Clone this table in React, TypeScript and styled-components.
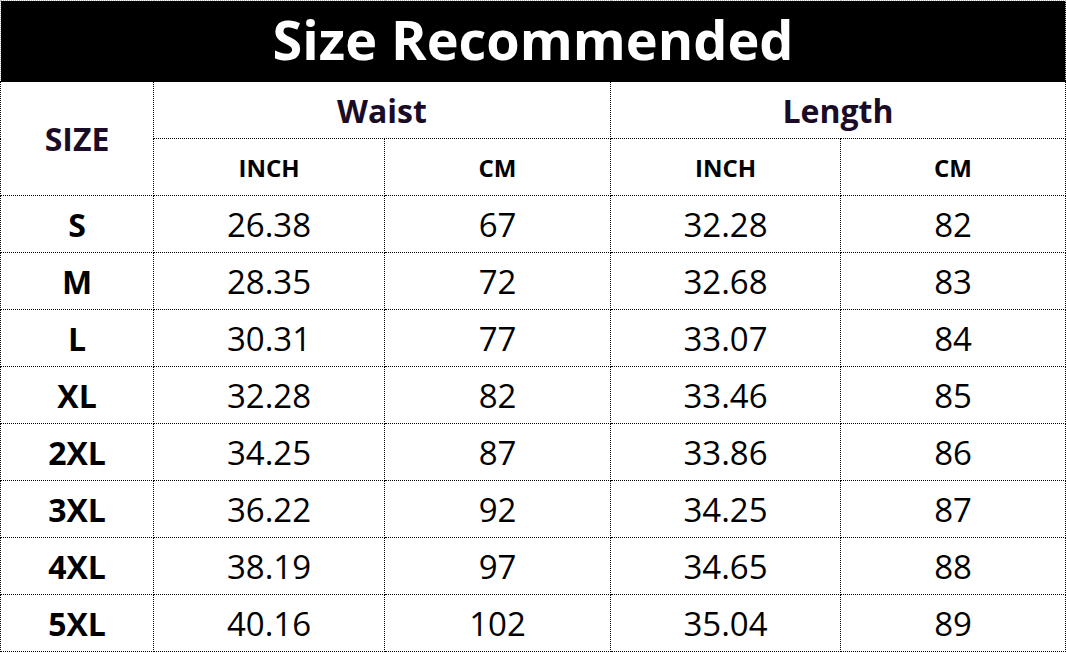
import styled, { createGlobalStyle } from 'styled-components';

const GlobalStyle = createGlobalStyle`
  html, body {
    margin: 0;
    padding: 0;
    background: #ffffff;
  }
  body {
    font-family: "Open Sans", "Noto Sans", sans-serif;
  }
`;

const rows = [
  ['S', '26.38', '67', '32.28', '82'],
  ['M', '28.35', '72', '32.68', '83'],
  ['L', '30.31', '77', '33.07', '84'],
  ['XL', '32.28', '82', '33.46', '85'],
  ['2XL', '34.25', '87', '33.86', '86'],
  ['3XL', '36.22', '92', '34.25', '87'],
  ['4XL', '38.19', '97', '34.65', '88'],
  ['5XL', '40.16', '102', '35.04', '89'],
];

const App = () => {
  return (
    <Page>
      <GlobalStyle />
      <Table>
        <colgroup>
          <col style={{ width: 153 }} />
          <col style={{ width: 231 }} />
          <col style={{ width: 226 }} />
          <col style={{ width: 230 }} />
          <col style={{ width: 225 }} />
        </colgroup>
        <thead>
          <tr>
            <Title colSpan={5}>Size Recommended</Title>
          </tr>
          <HeadRow>
            <GroupCell rowSpan={2}>SIZE</GroupCell>
            <GroupCell colSpan={2}>Waist</GroupCell>
            <GroupCell colSpan={2}>Length</GroupCell>
          </HeadRow>
          <HeadRow>
            <UnitCell>INCH</UnitCell>
            <UnitCell>CM</UnitCell>
            <UnitCell>INCH</UnitCell>
            <UnitCell>CM</UnitCell>
          </HeadRow>
        </thead>
        <tbody>
          {rows.map((r) => (
            <DataRow key={r[0]}>
              <SizeCell>{r[0]}</SizeCell>
              {r.slice(1).map((v, i) => (
                <ValueCell key={i}>{v}</ValueCell>
              ))}
            </DataRow>
          ))}
        </tbody>
      </Table>
    </Page>
  );
};

export default App;

const Page = styled.div`
  width: 1066px;
  height: 653px;
  overflow: hidden;
`;

const Table = styled.table`
  width: 1066px;
  border-collapse: collapse;
  table-layout: fixed;
  color: #000;
`;

const Title = styled.th`
  height: 76px;
  padding: 0 0 4px;
  background: #000;
  color: #fff;
  font-size: 54px;
  font-weight: 700;
  line-height: 1;
  text-align: center;
  border: 1px dotted #bbb;
  border-bottom: 1px dotted #000;
`;

const HeadRow = styled.tr`
  height: 57px;
`;

const GroupCell = styled.th`
  border: 1px dotted #000;
  color: #1a0c26;
  font-size: 32px;
  font-weight: 700;
  text-align: center;
  padding: 0;
`;

const UnitCell = styled.th`
  border: 1px dotted #000;
  font-size: 24px;
  font-weight: 700;
  text-align: center;
  padding: 0;
`;

const DataRow = styled.tr`
  height: 57px;
`;

const SizeCell = styled.td`
  border: 1px dotted #000;
  font-size: 32px;
  font-weight: 700;
  text-align: center;
  padding: 0;
`;

const ValueCell = styled.td`
  border: 1px dotted #000;
  font-size: 33px;
  font-weight: 400;
  text-align: center;
  padding: 0;
`;
